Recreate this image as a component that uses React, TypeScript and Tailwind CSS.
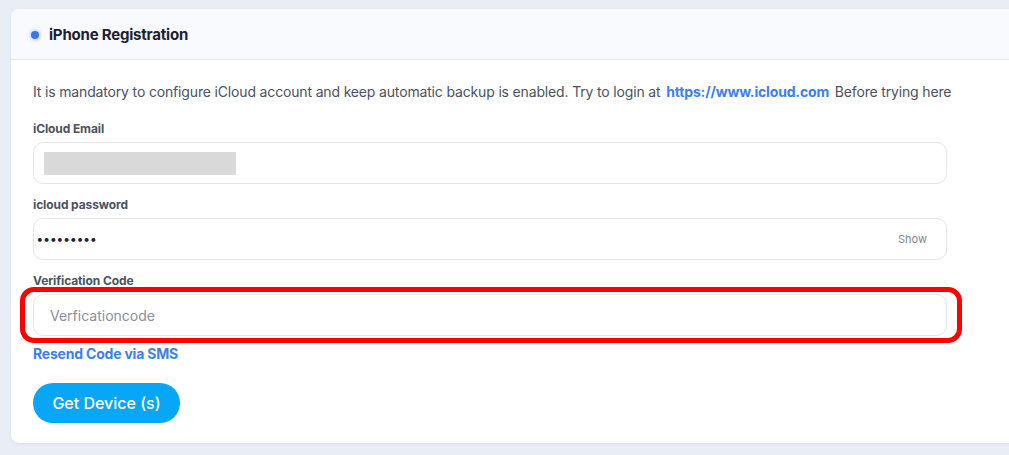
import React from 'react';

const font = { fontFamily: 'Inter, "Noto Sans", sans-serif' };

function Field({ label, children }: { label: string; children: React.ReactNode }) {
    return (
        <div className="mt-[14px] first:mt-0">
            <div className="text-[12px] leading-[14px] font-bold text-[#4a5163] mb-[6px] tracking-[-0.1px]">{label}</div>
            {children}
        </div>
    );
}

export default function App() {
    return (
        <div className="min-h-[455px] w-full overflow-hidden bg-[#e9eef6] pl-[11px] pt-[9px] pb-[12px]" style={font}>
            <div className="w-[1020px] bg-white rounded-l-[8px] shadow-[0_1px_3px_rgba(30,50,90,0.08)]">
                <div className="h-[51px] flex items-center pl-[20px] pt-[2px] bg-[#f8fafd] rounded-tl-[8px] border-b border-[#e4e6ea]">
                    <span className="w-[8px] h-[8px] rounded-full bg-[#3a74f2] shadow-[0_0_4px_rgba(58,116,242,0.5)] mr-[10px]" />
                    <h2 className="text-[15px] font-bold text-[#1c2030] tracking-[-0.2px]">iPhone Registration</h2>
                </div>

                <div className="pl-[22px] pt-[22px] pb-[20px]">
                    <p className="text-[14px] leading-[20px] text-[#4b5262] tracking-[-0.16px]">
                        It is mandatory to configure iCloud account and keep automatic backup is enabled. Try to login at{' '}
                        <a className="font-bold text-[#3b7ff0] mx-[2px]">https://www.icloud.com</a> Before trying here
                    </p>

                    <div className="mt-[20px] w-[914px]">
                        <Field label="iCloud Email">
                            <div className="h-[42px] rounded-[10px] border border-[#e3e5e9] flex items-center pl-[10px]">
                                <div className="w-[192px] h-[23px] bg-[#d9d9d9]" />
                            </div>
                        </Field>

                        <Field label="icloud password">
                            <div className="h-[42px] rounded-[10px] border border-[#e3e5e9] flex items-center justify-between pl-[3px] pr-[19px]">
                                <span className="text-[12px] tracking-[1px] text-[#1c2030] font-bold">•••••••••</span>
                                <span className="text-[11px] text-[#808590]">Show</span>
                            </div>
                        </Field>

                        <Field label="Verification Code">
                            <div className="relative">
                                <div className="h-[42px] rounded-[10px] border border-[#e3e5e9] flex items-center pl-[16px]">
                                    <span className="text-[14px] text-[#8b8f98]">Verficationcode</span>
                                </div>
                                <div className="absolute left-[-13px] right-[-15px] top-[-7px] bottom-[-7px] border-[5px] border-[#ff0000] rounded-[14px]" />
                            </div>
                        </Field>

                        <a className="block mt-[9px] text-[14px] leading-[18px] font-bold text-[#3b7ff0] tracking-[-0.2px]">Resend Code via SMS</a>

                        <button className="mt-[20px] h-[40px] w-[147px] rounded-full bg-[#08a6f6] text-white text-[16px] font-medium">
                            Get Device (s)
                        </button>
                    </div>
                </div>
            </div>
        </div>
    );
}
